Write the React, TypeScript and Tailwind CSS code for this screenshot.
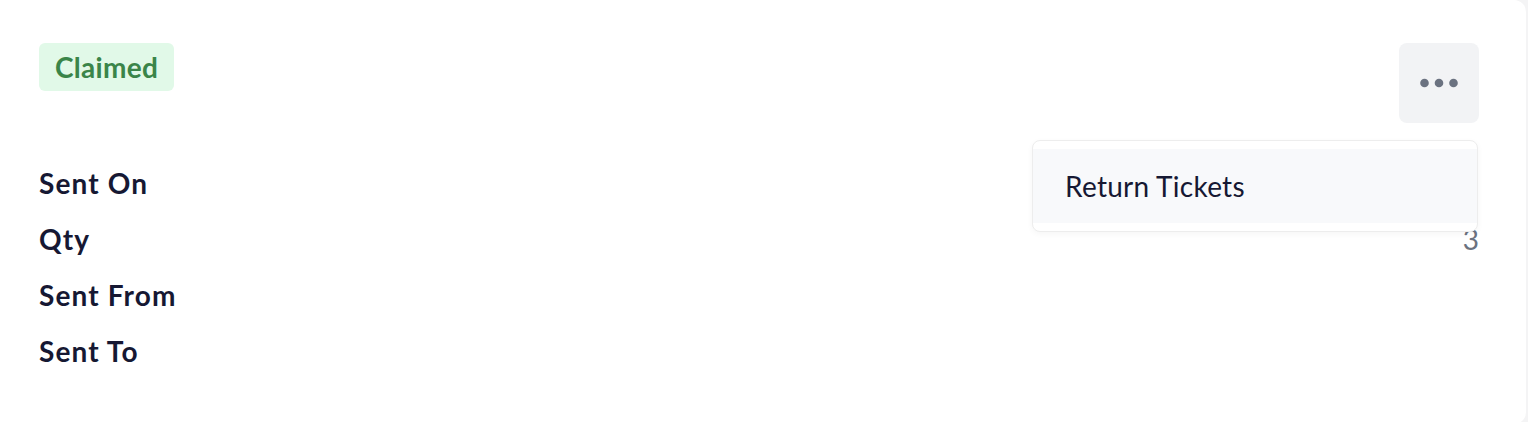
import { useState } from "react";

const rows = [
  { label: "Sent On", value: "" },
  { label: "Qty", value: "3" },
  { label: "Sent From", value: "" },
  { label: "Sent To", value: "" },
];

function DotsIcon() {
  return (
    <svg width="40" height="12" viewBox="0 0 40 12" fill="#6b7280">
      <circle cx="5.5" cy="6" r="4.3" />
      <circle cx="20" cy="6" r="4.3" />
      <circle cx="34.5" cy="6" r="4.3" />
    </svg>
  );
}

export default function App() {
  const [open, setOpen] = useState(true);

  return (
    <div className="w-[1528px] h-[422px] bg-[#f4f4f5] overflow-hidden font-['Lato',sans-serif]">
      <div className="relative w-[1526px] h-[424px] bg-white rounded-r-xl pl-[39px] pr-[47px] pt-[43px]">
        <div className="flex items-start justify-between">
          <span className="h-12 leading-[48px] px-4 rounded-md bg-[#e1f9e8] text-[#3a8549] text-[28px] font-bold tracking-[0.01em]">
            Claimed
          </span>
          <button
            onClick={() => setOpen(!open)}
            className="w-20 h-20 rounded-lg bg-[#f2f3f5] flex items-center justify-center"
          >
            <DotsIcon />
          </button>
        </div>

        <div className="mt-8 flex flex-col">
          {rows.map((row, index) => (
            <div key={index} className="flex justify-between h-14 leading-[56px] text-[28px]">
              <span className="font-bold tracking-[0.04em] text-[#161833]">{row.label}</span>
              <span className="text-[#6b7280]">{row.value}</span>
            </div>
          ))}
        </div>

        {open && (
          <div className="absolute top-[140px] right-[48px] w-[446px] rounded-lg border border-[#ededed] bg-white py-2 shadow-[0_2px_6px_rgba(0,0,0,0.04)]">
            <div className="bg-[#f8f9fb] px-8 py-4 leading-[42px] text-[28px] tracking-[0.01em] text-[#161833]">
              Return Tickets
            </div>
          </div>
        )}
      </div>
    </div>
  );
}
